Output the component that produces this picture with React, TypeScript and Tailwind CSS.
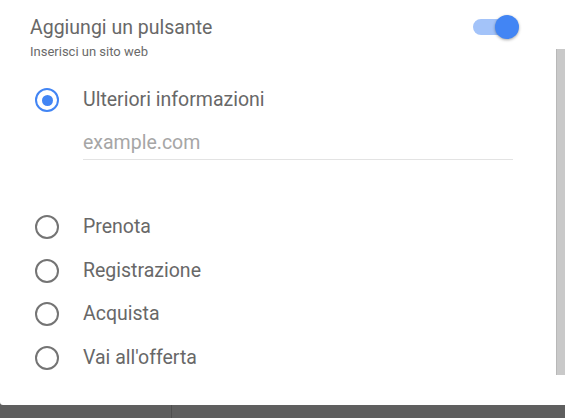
import React from "react";

function Radio({ checked }: { checked?: boolean }) {
  return checked ? (
    <div className="w-6 h-6 rounded-full border-[2.5px] border-[#4285f4] flex items-center justify-center shrink-0">
      <div className="w-[11px] h-[11px] rounded-full bg-[#4285f4]" />
    </div>
  ) : (
    <div className="w-6 h-6 rounded-full border-[2.5px] border-[#747474] shrink-0" />
  );
}

function Toggle() {
  return (
    <div className="relative w-[46px] h-6 -mt-px shrink-0">
      <div className="absolute left-0 top-[4px] h-[16px] w-[38px] rounded-full bg-[#a3c3f9]" />
      <div className="absolute right-0 top-0 w-6 h-6 rounded-full bg-[#4285f4] shadow-[0_1px_3px_rgba(0,0,0,0.35)]" />
    </div>
  );
}

export default function App() {
  const options = ["Prenota", "Registrazione", "Acquista", "Vai all'offerta"];
  return (
    <div className="w-[565px] h-[418px] flex flex-col bg-[#5f5f5f] font-['Roboto',sans-serif] overflow-hidden">
      <div className="h-[405px] bg-white flex rounded-bl-[3px]">
        <div className="flex-1 pl-[30px] pr-[37px] pt-[16px] flex flex-col">
          <div className="flex items-start justify-between">
            <div className="text-[19.5px] leading-[24px] text-[#686868]">Aggiungi un pulsante</div>
            <Toggle />
          </div>
          <div className="mt-[4px] text-[13px] leading-[16px] text-[#6a6a6a]">Inserisci un sito web</div>

          <div className="mt-[28px] flex items-center pl-[5px] h-6">
            <Radio checked />
            <span className="ml-[24px] text-[19.5px] leading-[24px] text-[#686868]">Ulteriori informazioni</span>
          </div>

          <div className="mt-[19px] ml-[53px] w-[430px] pb-[4px] border-b border-[#e3e3e3]">
            <div className="text-[19.5px] leading-[24px] text-[#a6a6a6]">example.com</div>
          </div>

          <div className="mt-[55px] flex flex-col gap-[19.5px]">
            {options.map((o) => (
              <div key={o} className="flex items-center pl-[5px] h-6">
                <Radio />
                <span className="ml-[24px] text-[19.5px] leading-[24px] text-[#686868]">{o}</span>
              </div>
            ))}
          </div>
        </div>
        <div className="w-[9px] shrink-0">
          <div className="mt-[49px] h-[326px] bg-[#c9c9c9] border-l border-[#b8b8b8]" />
        </div>
      </div>
      <div className="flex-1 flex">
        <div className="w-[172px] border-r border-[#4f4f4f]" />
        <div className="flex-1" />
      </div>
    </div>
  );
}
